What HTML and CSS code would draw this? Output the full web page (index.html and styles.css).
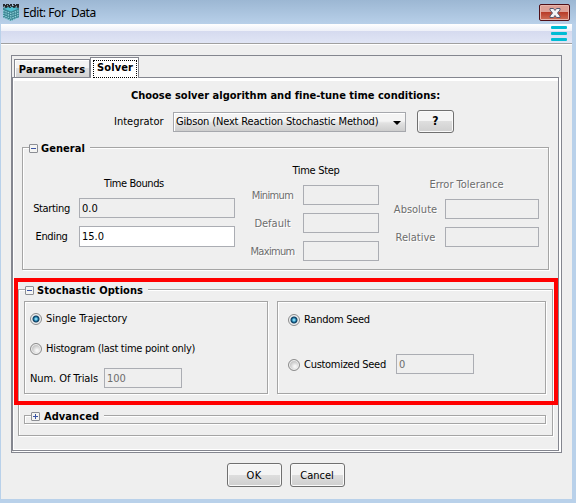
FILE: index.html
```html
<!DOCTYPE html>
<html lang="en">
<head>
<meta charset="utf-8">
<title>Edit: For Data</title>
<link rel="stylesheet" href="styles.css">
</head>
<body>
<div class="window">
  <header class="titlebar">
    <svg class="app-icon" width="17" height="17" viewBox="0 0 17 18" preserveAspectRatio="none">
      <path fill="#3b8592" d="M0 4L8 2l8 2v10l-8 4-8-4z"/>
      <path fill="#4fc0d0" d="M1 5l7-2 7 2-7 3z"/>
      <path stroke="#93d3dc" stroke-width="1.2" stroke-dasharray="1.500 1" fill="none" d="M0 7l8 3 8-3M0 9.500l8 3 8-3M0 12l8 3 8-3M1 14.500l7 3 7-3"/>
      <path fill="#23272a" d="M0 0h2v1h1V0h3v1h1V0h2v2h1V0h2v1h1V0h3v4h-2V3h-2v1h-2V3H8v1H6V3H4v1H2V3H0z"/>
      <path stroke="#98a7ad" d="M1 2.500h1m2-1h1m2 1h1m2-1h1m2 1h1"/>
    </svg>
    <h1 class="title">Edit: For&nbsp; Data</h1>
    <button class="close" aria-label="Close">
      <svg width="12" height="10" viewBox="0 0 12 10"><path d="M1 .5h3.500L6 2.500 7.500.5H11v1.500L8.500 5 11 8v1.500H7.500L6 7.500 4.500 9.500H1V8l2.500-3L1 2z" fill="#f4f4f6" stroke="#555a70"/></svg>
    </button>
  </header>
  <div class="toolbar"><div class="menu"><i></i><i></i><i></i></div></div>
  <main class="client">
    <section class="tabs">
      <nav class="tablist"><span class="tab">Parameters</span><span class="tab active"><b>Solver</b></span></nav>
      <div class="page">
        <h2 class="heading">Choose solver algorithm and fine-tune time conditions:</h2>
        <div class="integrator">
          <span>Integrator</span>
          <div class="combo"><span>Gibson (Next Reaction Stochastic Method)</span><svg width="8" height="4"><path d="M0 0h8L4 4z"/></svg></div>
          <button class="btn help">?</button>
        </div>
        <section class="group general">
          <h3 class="legend"><i class="toggle"></i><span>General</span></h3>
          <div class="bounds">
            <div class="caption">Time Bounds</div>
            <label>Starting</label><div class="field">0.0</div>
            <label>Ending</label><div class="field editable">15.0</div>
          </div>
          <div class="step">
            <div class="caption">Time Step</div>
            <label class="tight">Minimum</label><div class="field"></div>
            <label>Default</label><div class="field"></div>
            <label class="tight">Maximum</label><div class="field"></div>
          </div>
          <div class="tolerance">
            <div class="caption">Error Tolerance</div>
            <label>Absolute</label><div class="field"></div>
            <label>Relative</label><div class="field"></div>
          </div>
        </section>
        <section class="group options">
          <h3 class="legend"><i class="toggle"></i><span>Stochastic Options</span></h3>
          <div class="panels">
            <div class="group panel trials">
              <div class="choice"><i class="radio on"></i><span class="single">Single Trajectory</span></div>
              <div class="choice"><i class="radio"></i><span>Histogram (last time point only)</span></div>
              <div class="count"><span>Num. Of Trials</span><div class="field off">100</div></div>
            </div>
            <div class="group panel seed">
              <div class="choice"><i class="radio on"></i><span>Random Seed</span></div>
              <div class="choice custom"><i class="radio"></i><span>Customized Seed</span><div class="field off">0</div></div>
            </div>
          </div>
          <div class="group advanced"><h3 class="legend"><i class="toggle plus"></i><span>Advanced</span></h3></div>
          <div class="highlight"></div>
        </section>
      </div>
    </section>
    <footer class="actions"><button class="btn ok">OK</button><button class="btn">Cancel</button></footer>
  </main>
</div>
</body>
</html>
```
FILE: styles.css
```css
* { box-sizing: border-box; }
body { margin: 0; font: 11px/13px "DejaVu Sans Condensed", "DejaVu Sans", sans-serif; font-stretch: condensed; color: #000; }
h1, h2, h3 { margin: 0; font-size: inherit; }
button { font: inherit; color: inherit; padding: 0; }
span, label, .caption, .heading { white-space: nowrap; }
.window { width: 576px; height: 503px; background: #b9d1ea; overflow: hidden; }

.titlebar { height: 24px; display: flex; align-items: flex-start; background: linear-gradient(#9cb7d3, #b8d0e9); padding: 4px 6px 0 3px; }
.title { font: 12px/18px "Noto Sans", sans-serif; margin-left: 3px; letter-spacing: -.42px; }
.close { margin-left: auto; width: 31px; height: 17px; border: 1px solid #501018; border-radius: 2px; background: linear-gradient(#dda096 0 45%, #b83b27 48%, #cf7058); box-shadow: inset 0 0 0 1px #e7b5ab; display: flex; align-items: center; justify-content: center; }
.toolbar { height: 21px; margin: 0 4px 0 1px; background: linear-gradient(#fff, #edf0f8 7px, #d5daef 7px, #e0e5f5 19px, #a0a0a0 19px 20px, #fff 20px); padding: 2px 5px 0 0; }
.menu { width: 16px; margin-left: auto; display: grid; gap: 3px; }
.menu i { height: 3px; background: #00bcd4; border-radius: 1px; }
.client { height: 454px; margin: 0 4px 0 1px; background: #efefef; padding: 10px 10px 0; }

.tabs { height: 398px; border: 1px solid #84868f; background: #efefef; display: flex; flex-direction: column; }
.tablist { height: 21px; padding: 1px 0 0 2px; display: flex; align-items: flex-end; }
.tab { width: 76px; height: 18px; border: 1px solid #84868f; border-bottom: 0; background: linear-gradient(#f3f3f3 0 50%, #dfdfdf 50%, #d3d3d3); font-weight: bold; line-height: 19px; text-align: center; box-shadow: inset 1px 1px #fff; letter-spacing: .2px; }
.tab.active { width: 49px; height: 21px; margin: 0 0 -1px; background: #fff; padding: 2px 1px 0 2px; z-index: 1; }
.tab b { display: block; height: 18px; line-height: 14px; border: 1px dotted #000; letter-spacing: .1px; }
.page { width: 547px; height: 374px; border: 1px solid #84868f; box-shadow: inset 1px 3px #fff, inset -0px -1px #fff, 2px 1px #fff; padding: 11px 5px 0; }
.heading { font-weight: bold; display: flex; justify-content: center; width: 309px; margin-left: 113px; letter-spacing: .01px; }
.integrator { display: flex; align-items: center; height: 23px; margin: 8px 0 0 96px; }
.integrator > span { width: 59px; }
.combo { width: 233px; height: 20px; display: flex; align-items: center; justify-content: space-between; padding: 0 4px 0 2px; border: 1px solid #a6a8ad; background: linear-gradient(#f4f4f4 0 45%, #e2e2e2 55%, #cdcdcd); box-shadow: inset 1px 1px #fff; letter-spacing: -.16px; }
.combo svg { margin-top: 3px; }
.btn { width: 55px; height: 24px; border: 1px solid #707070; border-radius: 3px; background: linear-gradient(#f4f4f4 0 48%, #dedede 50%, #cfcfcf); box-shadow: inset 0 0 0 1px #fafafa; }
.ok { letter-spacing: .4px; }
.help { width: 37px; height: 23px; margin-left: 11px; font-weight: bold; font-size: 12px; }

.group { border: 1px solid #a5a5a5; box-shadow: 1px 1px #fff, inset 1px 1px #fff; }
.legend { display: flex; align-items: center; height: 14px; width: max-content; padding-right: 5px; background: #efefef; font-weight: bold; letter-spacing: .06px; }
.toggle { width: 9px; height: 9px; margin-right: 3px; border: 1px solid #8c8e94; border-radius: 1px; background: linear-gradient(#3b55a5, #3b55a5) center / 5px 1px no-repeat, #f4f4f2; }
.plus { background: linear-gradient(#3b55a5, #3b55a5) center / 5px 1px no-repeat, linear-gradient(#3b55a5, #3b55a5) center / 1px 5px no-repeat, #f4f4f2; }
.field { height: 20px; border: 1px solid #abadb3; line-height: 20px; padding-left: 2px; background: #efefef; }
.field.editable { background: #fff; height: 21px; }
.general { width: 527px; height: 123px; margin: 14px 0 0 4px; display: grid; grid-template-columns: 221px 142px 161px; grid-template-rows: 14px auto; }
.general > .legend { grid-column: 1 / -1; margin: -7px 0 0 6px; }
.bounds, .step, .tolerance { display: grid; align-content: start; align-items: center; justify-items: center; row-gap: 8px; }
.bounds .field, .step .field, .tolerance .field { width: 100%; }
.caption { grid-column: 1 / -1; }
.bounds { grid-template-columns: 56px 156px; padding-top: 15px; }
.bounds .caption { margin-left: 10px; letter-spacing: -.4px; }
.bounds label { letter-spacing: -.35px; margin-left: 1px; }
.step { grid-template-columns: 58px 76px; padding-top: 2px; margin-left: 1px; justify-content: start; }
.step .caption { margin-left: 8px; letter-spacing: -.3px; }
.step label { margin-right: 3px; }
.step .tight { letter-spacing: -.65px; }
.tolerance { grid-template-columns: 59px 94px; padding-top: 16px; justify-content: start; }
.tolerance .caption { margin-left: 8px; }
.step label, .tolerance { color: #6d6d6d; text-shadow: 1px 1px #fff; }

.options { position: relative; width: 535px; height: 147px; margin-top: 19px; padding: 0 5px; }
.options > .legend { margin: -7px 0 0 1px; }
.panels { display: flex; gap: 9px; margin-top: 4px; }
.panel { height: 93px; width: 244px; }
.seed { width: 269px; }
.choice { display: flex; align-items: center; height: 20px; }
.choice span { letter-spacing: -.28px; margin-top: -1px; }
.choice .single { letter-spacing: -.06px; }
.radio { width: 12px; height: 12px; border-radius: 50%; border: 1px solid #8c8c8c; margin-right: 4px; background: radial-gradient(circle at 60% 65%, #f5f5f5 1px, #c8c8c8 5px); box-shadow: inset 0 0 0 1px #f1f1f1; }
.radio.on { background: radial-gradient(circle at 50% 50%, #80d4ef 0 1px, #16709f 2px, #123d5d 3px, #dfe4e8 4px); }
.trials { padding: 7px 0 0 5px; display: grid; align-content: start; gap: 10px; }
.count { display: flex; align-items: center; height: 20px; margin-top: -1px; }
.count > span { width: 74px; letter-spacing: -.08px; }
.off { width: 78px; color: #6d6d6d; }
.seed { padding: 8px 0 0 10px; display: grid; align-content: start; gap: 25px; }
.custom > span { width: 92px; }
.custom .off { margin-top: -2px; }
.advanced { width: 522px; height: 9px; margin-top: 21px; }
.advanced .legend { margin: -7px 0 0 6px; }
.advanced .legend span { margin-left: 1px; }
.highlight { position: absolute; inset: -12px -6px 30px -5px; border: 4px solid red; }
.actions { display: flex; justify-content: center; gap: 8px; padding-top: 10px; margin-right: 2px; }
```
